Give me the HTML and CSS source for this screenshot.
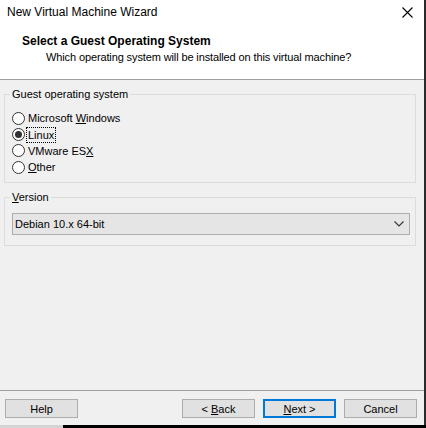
FILE: index.html
```html
<!DOCTYPE html>
<html>
<head>
<meta charset="utf-8">
<link rel="stylesheet" href="styles.css">
</head>
<body>
<div class="screen">
  <div class="window">
    <div class="header">
      <div class="titlebar">
        <span class="title">New Virtual Machine Wizard</span>
        <svg class="close" width="11" height="11" viewBox="0 0 11 11"><path d="M0.5 0.5 L10.5 10.5 M10.5 0.5 L0.5 10.5" stroke="#000" stroke-width="1.1" fill="none"/></svg>
      </div>
      <div class="heading">Select a Guest Operating System</div>
      <div class="subheading">Which operating system will be installed on this virtual machine?</div>
    </div>
    <div class="content">
      <fieldset class="group group-os">
        <legend>Guest operating system</legend>
        <div class="radios">
          <div class="radio"><span class="circle"></span><span class="label">Microsoft <u>W</u>indows</span></div>
          <div class="radio"><span class="circle checked"></span><span class="label focus">Linux</span></div>
          <div class="radio"><span class="circle"></span><span class="label">VMware ES<u>X</u></span></div>
          <div class="radio"><span class="circle"></span><span class="label"><u>O</u>ther</span></div>
        </div>
      </fieldset>
      <fieldset class="group group-ver">
        <legend><u>V</u>ersion</legend>
        <div class="select">
          <span>Debian 10.x 64-bit</span>
          <svg width="10" height="6" viewBox="0 0 10 6"><path d="M0.5 0.5 L5 5 L9.5 0.5" stroke="#333" stroke-width="1.1" fill="none"/></svg>
        </div>
      </fieldset>
    </div>
    <div class="footer">
      <button class="btn">Help</button>
      <div class="spacer"></div>
      <button class="btn">&lt; <u>B</u>ack</button>
      <button class="btn primary"><u>N</u>ext &gt;</button>
      <button class="btn">Cancel</button>
    </div>
  </div>
  <div class="edge-right"></div>
</div>
<div class="bottom-strip"><div class="strip-light"></div><div class="strip-dark"></div></div>
</body>
</html>
```

FILE: styles.css
```css
* { box-sizing: border-box; }
html, body { margin: 0; padding: 0; }
body {
  width: 426px;
  height: 428px;
  overflow: hidden;
  background: #f0f0f0;
  font-family: "Liberation Sans", Arial, sans-serif;
  font-size: 11px;
  color: #000;
}
.screen { display: flex; height: 425px; }
.window {
  width: 424px;
  height: 425px;
  background: #f0f0f0;
  display: flex;
  flex-direction: column;
}
.edge-right { width: 2px; background: #2b2b2b; }
.bottom-strip { display: flex; height: 3px; }
.strip-light { width: 63px; background: #d4d4d4; }
.strip-dark { flex: 1; background: #000; }

.header {
  background: #fff;
  height: 80px;
  border-bottom: 1px solid #a0a0a0;
}
.titlebar {
  height: 34px;
  display: flex;
  align-items: flex-start;
  justify-content: space-between;
  padding: 5px 11px 0 7px;
  line-height: 14px;
  font-size: 12px;
}
.close { margin-top: 2px; }
.heading {
  font-weight: bold;
  font-size: 12px;
  padding-left: 22px;
  line-height: 15px;
}
.subheading {
  padding-left: 46px;
  margin-top: 1px;
  line-height: 15px;
  letter-spacing: -0.12px;
}

.content {
  flex: 1;
  padding: 7px 8px 0 4px;
}
.group {
  margin: 0;
  border: 1px solid #dcdcdc;
  padding: 0 0 0 7px;
}
.group legend {
  padding: 0 2px;
  margin-left: -2px;
  line-height: 14px;
}
.group-os { height: 96px; }
.radios { padding-top: 9px; display: flex; flex-direction: column; }
.radio {
  height: 16.4px;
  display: flex;
  align-items: center;
  gap: 2px;
}
.circle {
  width: 13px;
  height: 13px;
  border: 1px solid #333;
  border-radius: 50%;
  background: #fff;
  display: flex;
  align-items: center;
  justify-content: center;
}
.circle.checked::after {
  content: "";
  width: 7px;
  height: 7px;
  border-radius: 50%;
  background: #333;
}
.label { line-height: 14px; padding: 0 1px; }
.label.focus { outline: 1px dotted #000; outline-offset: 0; }

.group-ver {
  margin-top: 7px;
  height: 56px;
}
.select {
  margin-top: 9px;
  width: 398px;
  height: 22px;
  border: 1px solid #adadad;
  background: #e5e5e5;
  display: flex;
  align-items: center;
  justify-content: space-between;
  padding: 0 5px 0 2px;
}

.footer {
  height: 35px;
  border-top: 1px solid #a0a0a0;
  display: flex;
  align-items: flex-start;
  padding: 8px 7px 0 5px;
  gap: 8px;
}
.spacer { flex: 1; }
.btn {
  font-family: inherit;
  font-size: 11px;
  width: 73px;
  height: 19px;
  padding: 0;
  border: 1px solid #adadad;
  background: #e1e1e1;
  color: #000;
  line-height: 16px;
}
.btn.primary { border: 2px solid #0078d7; }
```
